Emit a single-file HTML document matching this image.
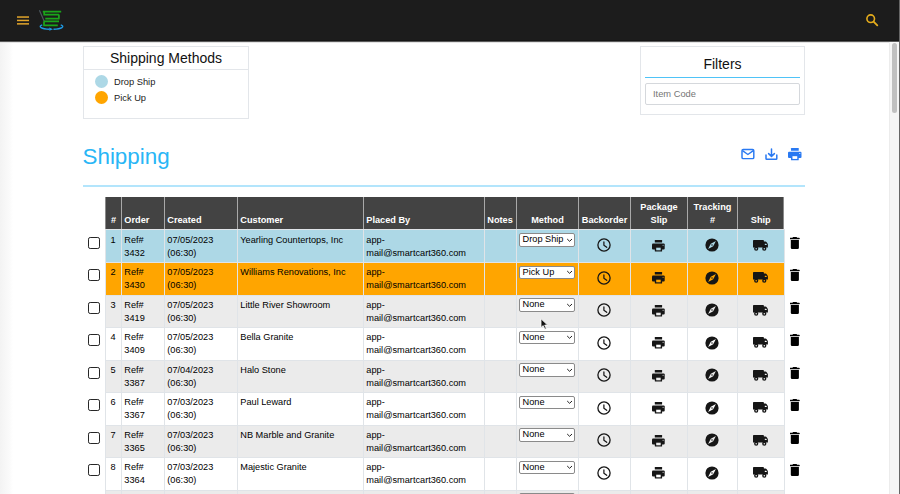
<!DOCTYPE html>
<html><head><meta charset="utf-8"><style>
*{box-sizing:border-box}
html,body{margin:0;padding:0;background:#fff;width:900px;height:494px;overflow:hidden;font-family:"Liberation Sans",sans-serif;color:#222}
.abs{position:absolute}
.hdr{position:absolute;left:0;top:0;width:900px;height:41px;background:#1c1c1c;box-shadow:0 1px 1px rgba(0,0,0,.65), inset 0 -1px 0 #151515}
.lgrad{position:absolute;left:0;top:43px;width:13px;height:452px;background:linear-gradient(to right,#f3f3f3,#fafafa 70%,#fff)}
.sb{position:absolute;left:889px;top:42px;width:10px;height:452px;background:#f6f6f6;border-left:1px solid #ececec}
.thumb{position:absolute;left:2px;top:1.3px;width:5.4px;height:70px;border-radius:2.75px;background:#c1c1c1}
.redge{position:absolute;left:899px;top:0;width:1px;height:494px;background:#666}
.sm{position:absolute;left:83px;top:46px;width:166px;height:73px;border:1px solid #e3e6ea}
.sm .t{position:absolute;left:0;top:0;width:164px;height:23px;border-bottom:1px solid #e3e6ea;font-size:14px;text-align:center;line-height:22px;color:#111}
.leg{position:absolute;left:11px;font-size:9.3px;color:#222}
.leg .dot{position:absolute;left:0;top:0;width:13px;height:13px;border-radius:50%}
.leg span{position:absolute;left:19px;top:1px;white-space:nowrap;line-height:12px}
.fl{position:absolute;left:640px;top:46px;width:165px;height:69px;border:1px solid #e3e6ea}
.fl .t{position:absolute;left:4px;top:0;width:155px;height:31px;border-bottom:1.5px solid #4fc3f7;font-size:14px;text-align:center;line-height:34px;color:#111}
.fl .in{position:absolute;left:4px;top:36px;width:155px;height:22px;border:1px solid #d5d8dc;border-radius:2px;font-size:9.3px;color:#757575;padding-left:7px;line-height:21px}
.ttl{position:absolute;left:82.5px;top:141.7px;font-size:22.4px;color:#29b6f6;line-height:30px}
.hl{position:absolute;left:83px;top:185px;width:722px;height:2px;background:#b3e5fc}
.th{position:absolute;color:#fff;font-weight:bold;font-size:9.2px;line-height:13.1px;white-space:nowrap}
.td{position:absolute;color:#000;font-size:9.2px;line-height:13px;white-space:nowrap}
.hb{left:105px;width:678.5px;height:1px;background:#e0e4e8}
.vb{top:229px;width:1px;height:265px;background:#e0e4e8}
.sel{position:absolute;height:13.5px;width:56px;border:1px solid #8a8a8a;border-radius:2px;background:#fff;font-size:9.2px;line-height:11px;padding-left:2.6px;color:#000}
.sel svg{position:absolute;right:1.2px;top:3.6px}
.cb{position:absolute;left:88px;width:12px;height:12px;border:1.5px solid #262626;border-radius:2.2px;background:#fff}
</style></head><body>

<div class="hdr">
<svg class="abs" style="left:16px;top:15px" width="14" height="11" viewBox="0 0 14 11"><rect x="1" y="1.3" width="12" height="1.5" fill="#e2a52b"/><rect x="1" y="4.7" width="12" height="1.5" fill="#e2a52b"/><rect x="1" y="8.1" width="12" height="1.5" fill="#e2a52b"/></svg>
<svg class="abs" style="left:37px;top:8px" width="28" height="25" viewBox="0 0 28 25">
<path d="M2.4 2.3L7.2 13.3" stroke="#4b565e" stroke-width="1.2" fill="none"/>
<path d="M5.8 3.7H24.2M7.2 3.7V6.5M6.4 6.5H21.9M21.9 6.5V10.6M22.6 10.6H8.3M6.6 13.4H22M7 13.4V17.3M6.2 17.3H20.8" stroke="#1aa51a" stroke-width="1.75" fill="none" stroke-linecap="butt"/>
<path d="M5.25 16.9A11.3 2.8 0 0 0 12.5 21.26M16.5 21.26A11.3 2.8 0 0 0 23.75 16.9" stroke="#1e9be6" stroke-width="1.35" fill="none"/>
<path d="M12.3 19.6L16 21.2L12.3 22.8Z" fill="#1e9be6"/>
</svg>
<svg class="abs" style="left:864px;top:12px" width="16" height="16" viewBox="0 0 16 16"><circle cx="6.7" cy="6.7" r="3.8" fill="none" stroke="#e5ac1c" stroke-width="1.6"/><path d="M9.6 9.7L13.3 13.4" stroke="#e5ac1c" stroke-width="1.8" stroke-linecap="round"/></svg>
</div>
<div class="lgrad"></div>
<div class="sb"><div class="thumb"></div></div><div class="redge"></div>

<div class="sm"><div class="t">Shipping Methods</div>
<div class="leg" style="top:27.6px"><div class="dot" style="background:#add8e6"></div><span>Drop Ship</span></div>
<div class="leg" style="top:43.9px"><div class="dot" style="background:#ffa500"></div><span>Pick Up</span></div>
</div>
<div class="fl"><div class="t">Filters</div><div class="in">Item Code</div></div>
<div class="ttl">Shipping</div>
<div class="hl"></div>

<svg class="abs" style="left:740px;top:147px" width="16" height="14" viewBox="0 0 16 14"><rect x="2.0" y="2.5" width="11.8" height="9.1" rx="1.2" fill="none" stroke="#2979f2" stroke-width="1.45"/><path d="M2.5 3.6L7.9 7.5L13.3 3.6" fill="none" stroke="#2979f2" stroke-width="1.4"/></svg>
<svg class="abs" style="left:764px;top:147.8px" width="15" height="14" viewBox="0 0 15 14"><path d="M7.5 1V8.2M4.6 5.6L7.5 8.4L10.4 5.6" fill="none" stroke="#2979f2" stroke-width="1.5" stroke-linecap="round" stroke-linejoin="round"/><path d="M2.0 7.0V10.4A0.8 0.8 0 0 0 2.8 11.2H12.0A0.8 0.8 0 0 0 12.8 10.4V7.0" fill="none" stroke="#2979f2" stroke-width="1.5" stroke-linecap="round"/></svg>

<svg class="abs" style="left:788.20px;top:148.00px" width="13.82" height="12.76" viewBox="0 0 13 12"><rect x="2.8" y="0.1" width="7.3" height="2.5" rx="0.3" fill="#2979f2"/><rect x="0" y="3.6" width="12.7" height="5.8" rx="1" fill="#2979f2"/><rect x="2.8" y="6.5" width="7.3" height="5" rx="0.5" fill="#2979f2"/><rect x="4.2" y="7.7" width="4.5" height="2.6" fill="#fff"/><circle cx="11.1" cy="5.2" r="0.55" fill="#fff"/></svg>
<div class="abs" style="left:105px;top:197px;width:678.5px;height:32px;background:#434343"></div>
<div class="abs" style="left:121px;top:197px;width:1px;height:32px;background:#a9a9a9"></div>
<div class="abs" style="left:164px;top:197px;width:1px;height:32px;background:#a9a9a9"></div>
<div class="abs" style="left:237px;top:197px;width:1px;height:32px;background:#a9a9a9"></div>
<div class="abs" style="left:363px;top:197px;width:1px;height:32px;background:#a9a9a9"></div>
<div class="abs" style="left:484px;top:197px;width:1px;height:32px;background:#a9a9a9"></div>
<div class="abs" style="left:516px;top:197px;width:1px;height:32px;background:#a9a9a9"></div>
<div class="abs" style="left:578px;top:197px;width:1px;height:32px;background:#a9a9a9"></div>
<div class="abs" style="left:630px;top:197px;width:1px;height:32px;background:#a9a9a9"></div>
<div class="abs" style="left:687px;top:197px;width:1px;height:32px;background:#a9a9a9"></div>
<div class="abs" style="left:737px;top:197px;width:1px;height:32px;background:#a9a9a9"></div>
<div class="abs" style="left:105px;top:197px;width:1px;height:32px;background:#8a8a8a"></div>
<div class="abs" style="left:782.5px;top:197px;width:1px;height:32px;background:#8a8a8a"></div>
<div class="th" style="left:106px;top:213.60px;width:15px;text-align:center">#</div>
<div class="th" style="left:124.30px;top:213.60px">Order</div>
<div class="th" style="left:167.30px;top:213.60px">Created</div>
<div class="th" style="left:240.30px;top:213.60px">Customer</div>
<div class="th" style="left:366.30px;top:213.60px">Placed By</div>
<div class="th" style="left:487.30px;top:213.60px">Notes</div>
<div class="th" style="left:517px;top:213.60px;width:61px;text-align:center">Method</div>
<div class="th" style="left:579px;top:213.60px;width:51px;text-align:center">Backorder</div>
<div class="th" style="left:631px;top:200.50px;width:56px;text-align:center">Package<br>Slip</div>
<div class="th" style="left:688px;top:200.50px;width:49px;text-align:center">Tracking<br>#</div>
<div class="th" style="left:738px;top:213.60px;width:45.5px;text-align:center">Ship</div>
<div class="abs" style="left:105px;top:229px;width:678.5px;height:33px;background:#add8e6"></div>
<div class="abs" style="left:105px;top:262px;width:678.5px;height:33px;background:#ffa500"></div>
<div class="abs" style="left:105px;top:295px;width:678.5px;height:32px;background:#ebebeb"></div>
<div class="abs" style="left:105px;top:327px;width:678.5px;height:33px;background:#ffffff"></div>
<div class="abs" style="left:105px;top:360px;width:678.5px;height:32px;background:#ebebeb"></div>
<div class="abs" style="left:105px;top:392px;width:678.5px;height:33px;background:#ffffff"></div>
<div class="abs" style="left:105px;top:425px;width:678.5px;height:32px;background:#ebebeb"></div>
<div class="abs" style="left:105px;top:457px;width:678.5px;height:33px;background:#ffffff"></div>
<div class="abs" style="left:105px;top:490px;width:678.5px;height:33px;background:#ebebeb"></div>
<div class="abs hb" style="top:229px"></div>
<div class="abs hb" style="top:262px"></div>
<div class="abs hb" style="top:295px"></div>
<div class="abs hb" style="top:327px"></div>
<div class="abs hb" style="top:360px"></div>
<div class="abs hb" style="top:392px"></div>
<div class="abs hb" style="top:425px"></div>
<div class="abs hb" style="top:457px"></div>
<div class="abs hb" style="top:490px"></div>
<div class="abs vb" style="left:105px"></div>
<div class="abs vb" style="left:121px"></div>
<div class="abs vb" style="left:164px"></div>
<div class="abs vb" style="left:237px"></div>
<div class="abs vb" style="left:363px"></div>
<div class="abs vb" style="left:484px"></div>
<div class="abs vb" style="left:516px"></div>
<div class="abs vb" style="left:578px"></div>
<div class="abs vb" style="left:630px"></div>
<div class="abs vb" style="left:687px"></div>
<div class="abs vb" style="left:737px"></div>
<div class="abs vb" style="left:783.5px"></div>
<div class="td" style="left:105px;width:16px;text-align:center;top:233.90px">1</div>
<div class="td" style="left:124.30px;top:233.90px">Ref#<br>3432</div>
<div class="td" style="left:167.30px;top:233.90px">07/05/2023<br>(06:30)</div>
<div class="td" style="left:240.30px;top:233.90px">Yearling Countertops, Inc</div>
<div class="td" style="left:366.30px;top:233.90px">app-<br>mail@smartcart360.com</div>
<div class="td" style="left:105px;width:16px;text-align:center;top:266.40px">2</div>
<div class="td" style="left:124.30px;top:266.40px">Ref#<br>3430</div>
<div class="td" style="left:167.30px;top:266.40px">07/05/2023<br>(06:30)</div>
<div class="td" style="left:240.30px;top:266.40px">Williams Renovations, Inc</div>
<div class="td" style="left:366.30px;top:266.40px">app-<br>mail@smartcart360.com</div>
<div class="td" style="left:105px;width:16px;text-align:center;top:298.90px">3</div>
<div class="td" style="left:124.30px;top:298.90px">Ref#<br>3419</div>
<div class="td" style="left:167.30px;top:298.90px">07/05/2023<br>(06:30)</div>
<div class="td" style="left:240.30px;top:298.90px">Little River Showroom</div>
<div class="td" style="left:366.30px;top:298.90px">app-<br>mail@smartcart360.com</div>
<div class="td" style="left:105px;width:16px;text-align:center;top:331.40px">4</div>
<div class="td" style="left:124.30px;top:331.40px">Ref#<br>3409</div>
<div class="td" style="left:167.30px;top:331.40px">07/05/2023<br>(06:30)</div>
<div class="td" style="left:240.30px;top:331.40px">Bella Granite</div>
<div class="td" style="left:366.30px;top:331.40px">app-<br>mail@smartcart360.com</div>
<div class="td" style="left:105px;width:16px;text-align:center;top:363.90px">5</div>
<div class="td" style="left:124.30px;top:363.90px">Ref#<br>3387</div>
<div class="td" style="left:167.30px;top:363.90px">07/04/2023<br>(06:30)</div>
<div class="td" style="left:240.30px;top:363.90px">Halo Stone</div>
<div class="td" style="left:366.30px;top:363.90px">app-<br>mail@smartcart360.com</div>
<div class="td" style="left:105px;width:16px;text-align:center;top:396.40px">6</div>
<div class="td" style="left:124.30px;top:396.40px">Ref#<br>3367</div>
<div class="td" style="left:167.30px;top:396.40px">07/03/2023<br>(06:30)</div>
<div class="td" style="left:240.30px;top:396.40px">Paul Leward</div>
<div class="td" style="left:366.30px;top:396.40px">app-<br>mail@smartcart360.com</div>
<div class="td" style="left:105px;width:16px;text-align:center;top:428.90px">7</div>
<div class="td" style="left:124.30px;top:428.90px">Ref#<br>3365</div>
<div class="td" style="left:167.30px;top:428.90px">07/03/2023<br>(06:30)</div>
<div class="td" style="left:240.30px;top:428.90px">NB Marble and Granite</div>
<div class="td" style="left:366.30px;top:428.90px">app-<br>mail@smartcart360.com</div>
<div class="td" style="left:105px;width:16px;text-align:center;top:461.40px">8</div>
<div class="td" style="left:124.30px;top:461.40px">Ref#<br>3364</div>
<div class="td" style="left:167.30px;top:461.40px">07/03/2023<br>(06:30)</div>
<div class="td" style="left:240.30px;top:461.40px">Majestic Granite</div>
<div class="td" style="left:366.30px;top:461.40px">app-<br>mail@smartcart360.com</div>
<div class="td" style="left:105px;width:16px;text-align:center;top:493.90px">9</div>
<div class="td" style="left:124.30px;top:493.90px">Ref#<br>3360</div>
<div class="td" style="left:167.30px;top:493.90px">07/03/2023<br>(06:30)</div>
<div class="td" style="left:240.30px;top:493.90px">Stone World</div>
<div class="td" style="left:366.30px;top:493.90px">app-<br>mail@smartcart360.com</div>
<div class="cb" style="top:236.60px"></div>
<div class="sel" style="left:519px;top:233.20px">Drop Ship<svg width="7" height="5" viewBox="0 0 7 5"><path d="M1.2 1.0L3.6 3.3L6.0 1.0" fill="none" stroke="#222" stroke-width="1"/></svg></div>
<svg class="abs" style="left:597.20px;top:238.20px" width="14" height="14" viewBox="0 0 14 14"><circle cx="7" cy="7" r="6.1" fill="none" stroke="#161616" stroke-width="1.3"/><path d="M6.9 3.9V7.3L9.7 9.3" fill="none" stroke="#161616" stroke-width="1.25" stroke-linecap="round" stroke-linejoin="round"/></svg>
<svg class="abs" style="left:652.10px;top:239.70px" width="13.00" height="12.00" viewBox="0 0 13 12"><rect x="2.8" y="0.1" width="7.3" height="2.5" rx="0.3" fill="#161616"/><rect x="0" y="3.6" width="12.7" height="5.8" rx="1" fill="#161616"/><rect x="2.8" y="6.5" width="7.3" height="5" rx="0.5" fill="#161616"/><rect x="4.2" y="7.7" width="4.5" height="2.6" fill="#add8e6"/><circle cx="11.1" cy="5.2" r="0.55" fill="#add8e6"/></svg>
<svg class="abs" style="left:705.40px;top:238.20px" width="14" height="14" viewBox="0 0 14 14"><circle cx="7" cy="7" r="6.6" fill="#161616"/><path d="M3.1 10.9L5.8 5.8L10.9 3.1L8.2 8.2Z" fill="#add8e6"/><circle cx="7" cy="7" r="0.75" fill="#161616"/></svg>
<svg class="abs" style="left:753.10px;top:239.90px" width="15" height="11" viewBox="0 0 15 11"><path d="M0.8 0H10.1A0.8 0.8 0 0 1 10.9 0.8V1.6H12.5Q13.1 1.6 13.5 2.1L14.5 3.5Q14.9 4 14.9 4.6V7.6H0V0.8A0.8 0.8 0 0 1 0.8 0Z" fill="#161616"/><path d="M11.8 3.7H13.2L13.8 4.6V5.1H11.8Z" fill="#add8e6"/><circle cx="3.2" cy="8.7" r="2.1" fill="#161616"/><circle cx="3.2" cy="8.7" r="0.75" fill="#add8e6"/><circle cx="11.3" cy="8.7" r="2.1" fill="#161616"/><circle cx="11.3" cy="8.7" r="0.75" fill="#add8e6"/></svg>
<svg class="abs" style="left:789.90px;top:236.50px" width="10" height="13" viewBox="0 0 10 13"><path d="M3.0 0.1H6.6L7.1 0.7H9.0A0.8 0.8 0 0 1 9.0 2.3H0.5A0.8 0.8 0 0 1 0.5 0.7H2.5Z" fill="#000"/><path d="M0.8 3.0H8.9V10.8A1.3 1.3 0 0 1 7.6 12.1H2.1A1.3 1.3 0 0 1 0.8 10.8Z" fill="#000"/></svg>
<div class="cb" style="top:269.10px"></div>
<div class="sel" style="left:519px;top:265.70px">Pick Up<svg width="7" height="5" viewBox="0 0 7 5"><path d="M1.2 1.0L3.6 3.3L6.0 1.0" fill="none" stroke="#222" stroke-width="1"/></svg></div>
<svg class="abs" style="left:597.20px;top:270.70px" width="14" height="14" viewBox="0 0 14 14"><circle cx="7" cy="7" r="6.1" fill="none" stroke="#161616" stroke-width="1.3"/><path d="M6.9 3.9V7.3L9.7 9.3" fill="none" stroke="#161616" stroke-width="1.25" stroke-linecap="round" stroke-linejoin="round"/></svg>
<svg class="abs" style="left:652.10px;top:272.20px" width="13.00" height="12.00" viewBox="0 0 13 12"><rect x="2.8" y="0.1" width="7.3" height="2.5" rx="0.3" fill="#161616"/><rect x="0" y="3.6" width="12.7" height="5.8" rx="1" fill="#161616"/><rect x="2.8" y="6.5" width="7.3" height="5" rx="0.5" fill="#161616"/><rect x="4.2" y="7.7" width="4.5" height="2.6" fill="#ffa500"/><circle cx="11.1" cy="5.2" r="0.55" fill="#ffa500"/></svg>
<svg class="abs" style="left:705.40px;top:270.70px" width="14" height="14" viewBox="0 0 14 14"><circle cx="7" cy="7" r="6.6" fill="#161616"/><path d="M3.1 10.9L5.8 5.8L10.9 3.1L8.2 8.2Z" fill="#ffa500"/><circle cx="7" cy="7" r="0.75" fill="#161616"/></svg>
<svg class="abs" style="left:753.10px;top:272.40px" width="15" height="11" viewBox="0 0 15 11"><path d="M0.8 0H10.1A0.8 0.8 0 0 1 10.9 0.8V1.6H12.5Q13.1 1.6 13.5 2.1L14.5 3.5Q14.9 4 14.9 4.6V7.6H0V0.8A0.8 0.8 0 0 1 0.8 0Z" fill="#161616"/><path d="M11.8 3.7H13.2L13.8 4.6V5.1H11.8Z" fill="#ffa500"/><circle cx="3.2" cy="8.7" r="2.1" fill="#161616"/><circle cx="3.2" cy="8.7" r="0.75" fill="#ffa500"/><circle cx="11.3" cy="8.7" r="2.1" fill="#161616"/><circle cx="11.3" cy="8.7" r="0.75" fill="#ffa500"/></svg>
<svg class="abs" style="left:789.90px;top:269.00px" width="10" height="13" viewBox="0 0 10 13"><path d="M3.0 0.1H6.6L7.1 0.7H9.0A0.8 0.8 0 0 1 9.0 2.3H0.5A0.8 0.8 0 0 1 0.5 0.7H2.5Z" fill="#000"/><path d="M0.8 3.0H8.9V10.8A1.3 1.3 0 0 1 7.6 12.1H2.1A1.3 1.3 0 0 1 0.8 10.8Z" fill="#000"/></svg>
<div class="cb" style="top:301.60px"></div>
<div class="sel" style="left:519px;top:298.20px">None<svg width="7" height="5" viewBox="0 0 7 5"><path d="M1.2 1.0L3.6 3.3L6.0 1.0" fill="none" stroke="#222" stroke-width="1"/></svg></div>
<svg class="abs" style="left:597.20px;top:303.20px" width="14" height="14" viewBox="0 0 14 14"><circle cx="7" cy="7" r="6.1" fill="none" stroke="#161616" stroke-width="1.3"/><path d="M6.9 3.9V7.3L9.7 9.3" fill="none" stroke="#161616" stroke-width="1.25" stroke-linecap="round" stroke-linejoin="round"/></svg>
<svg class="abs" style="left:652.10px;top:304.70px" width="13.00" height="12.00" viewBox="0 0 13 12"><rect x="2.8" y="0.1" width="7.3" height="2.5" rx="0.3" fill="#161616"/><rect x="0" y="3.6" width="12.7" height="5.8" rx="1" fill="#161616"/><rect x="2.8" y="6.5" width="7.3" height="5" rx="0.5" fill="#161616"/><rect x="4.2" y="7.7" width="4.5" height="2.6" fill="#ebebeb"/><circle cx="11.1" cy="5.2" r="0.55" fill="#ebebeb"/></svg>
<svg class="abs" style="left:705.40px;top:303.20px" width="14" height="14" viewBox="0 0 14 14"><circle cx="7" cy="7" r="6.6" fill="#161616"/><path d="M3.1 10.9L5.8 5.8L10.9 3.1L8.2 8.2Z" fill="#ebebeb"/><circle cx="7" cy="7" r="0.75" fill="#161616"/></svg>
<svg class="abs" style="left:753.10px;top:304.90px" width="15" height="11" viewBox="0 0 15 11"><path d="M0.8 0H10.1A0.8 0.8 0 0 1 10.9 0.8V1.6H12.5Q13.1 1.6 13.5 2.1L14.5 3.5Q14.9 4 14.9 4.6V7.6H0V0.8A0.8 0.8 0 0 1 0.8 0Z" fill="#161616"/><path d="M11.8 3.7H13.2L13.8 4.6V5.1H11.8Z" fill="#ebebeb"/><circle cx="3.2" cy="8.7" r="2.1" fill="#161616"/><circle cx="3.2" cy="8.7" r="0.75" fill="#ebebeb"/><circle cx="11.3" cy="8.7" r="2.1" fill="#161616"/><circle cx="11.3" cy="8.7" r="0.75" fill="#ebebeb"/></svg>
<svg class="abs" style="left:789.90px;top:301.50px" width="10" height="13" viewBox="0 0 10 13"><path d="M3.0 0.1H6.6L7.1 0.7H9.0A0.8 0.8 0 0 1 9.0 2.3H0.5A0.8 0.8 0 0 1 0.5 0.7H2.5Z" fill="#000"/><path d="M0.8 3.0H8.9V10.8A1.3 1.3 0 0 1 7.6 12.1H2.1A1.3 1.3 0 0 1 0.8 10.8Z" fill="#000"/></svg>
<div class="cb" style="top:334.10px"></div>
<div class="sel" style="left:519px;top:330.70px">None<svg width="7" height="5" viewBox="0 0 7 5"><path d="M1.2 1.0L3.6 3.3L6.0 1.0" fill="none" stroke="#222" stroke-width="1"/></svg></div>
<svg class="abs" style="left:597.20px;top:335.70px" width="14" height="14" viewBox="0 0 14 14"><circle cx="7" cy="7" r="6.1" fill="none" stroke="#161616" stroke-width="1.3"/><path d="M6.9 3.9V7.3L9.7 9.3" fill="none" stroke="#161616" stroke-width="1.25" stroke-linecap="round" stroke-linejoin="round"/></svg>
<svg class="abs" style="left:652.10px;top:337.20px" width="13.00" height="12.00" viewBox="0 0 13 12"><rect x="2.8" y="0.1" width="7.3" height="2.5" rx="0.3" fill="#161616"/><rect x="0" y="3.6" width="12.7" height="5.8" rx="1" fill="#161616"/><rect x="2.8" y="6.5" width="7.3" height="5" rx="0.5" fill="#161616"/><rect x="4.2" y="7.7" width="4.5" height="2.6" fill="#ffffff"/><circle cx="11.1" cy="5.2" r="0.55" fill="#ffffff"/></svg>
<svg class="abs" style="left:705.40px;top:335.70px" width="14" height="14" viewBox="0 0 14 14"><circle cx="7" cy="7" r="6.6" fill="#161616"/><path d="M3.1 10.9L5.8 5.8L10.9 3.1L8.2 8.2Z" fill="#ffffff"/><circle cx="7" cy="7" r="0.75" fill="#161616"/></svg>
<svg class="abs" style="left:753.10px;top:337.40px" width="15" height="11" viewBox="0 0 15 11"><path d="M0.8 0H10.1A0.8 0.8 0 0 1 10.9 0.8V1.6H12.5Q13.1 1.6 13.5 2.1L14.5 3.5Q14.9 4 14.9 4.6V7.6H0V0.8A0.8 0.8 0 0 1 0.8 0Z" fill="#161616"/><path d="M11.8 3.7H13.2L13.8 4.6V5.1H11.8Z" fill="#ffffff"/><circle cx="3.2" cy="8.7" r="2.1" fill="#161616"/><circle cx="3.2" cy="8.7" r="0.75" fill="#ffffff"/><circle cx="11.3" cy="8.7" r="2.1" fill="#161616"/><circle cx="11.3" cy="8.7" r="0.75" fill="#ffffff"/></svg>
<svg class="abs" style="left:789.90px;top:334.00px" width="10" height="13" viewBox="0 0 10 13"><path d="M3.0 0.1H6.6L7.1 0.7H9.0A0.8 0.8 0 0 1 9.0 2.3H0.5A0.8 0.8 0 0 1 0.5 0.7H2.5Z" fill="#000"/><path d="M0.8 3.0H8.9V10.8A1.3 1.3 0 0 1 7.6 12.1H2.1A1.3 1.3 0 0 1 0.8 10.8Z" fill="#000"/></svg>
<div class="cb" style="top:366.60px"></div>
<div class="sel" style="left:519px;top:363.20px">None<svg width="7" height="5" viewBox="0 0 7 5"><path d="M1.2 1.0L3.6 3.3L6.0 1.0" fill="none" stroke="#222" stroke-width="1"/></svg></div>
<svg class="abs" style="left:597.20px;top:368.20px" width="14" height="14" viewBox="0 0 14 14"><circle cx="7" cy="7" r="6.1" fill="none" stroke="#161616" stroke-width="1.3"/><path d="M6.9 3.9V7.3L9.7 9.3" fill="none" stroke="#161616" stroke-width="1.25" stroke-linecap="round" stroke-linejoin="round"/></svg>
<svg class="abs" style="left:652.10px;top:369.70px" width="13.00" height="12.00" viewBox="0 0 13 12"><rect x="2.8" y="0.1" width="7.3" height="2.5" rx="0.3" fill="#161616"/><rect x="0" y="3.6" width="12.7" height="5.8" rx="1" fill="#161616"/><rect x="2.8" y="6.5" width="7.3" height="5" rx="0.5" fill="#161616"/><rect x="4.2" y="7.7" width="4.5" height="2.6" fill="#ebebeb"/><circle cx="11.1" cy="5.2" r="0.55" fill="#ebebeb"/></svg>
<svg class="abs" style="left:705.40px;top:368.20px" width="14" height="14" viewBox="0 0 14 14"><circle cx="7" cy="7" r="6.6" fill="#161616"/><path d="M3.1 10.9L5.8 5.8L10.9 3.1L8.2 8.2Z" fill="#ebebeb"/><circle cx="7" cy="7" r="0.75" fill="#161616"/></svg>
<svg class="abs" style="left:753.10px;top:369.90px" width="15" height="11" viewBox="0 0 15 11"><path d="M0.8 0H10.1A0.8 0.8 0 0 1 10.9 0.8V1.6H12.5Q13.1 1.6 13.5 2.1L14.5 3.5Q14.9 4 14.9 4.6V7.6H0V0.8A0.8 0.8 0 0 1 0.8 0Z" fill="#161616"/><path d="M11.8 3.7H13.2L13.8 4.6V5.1H11.8Z" fill="#ebebeb"/><circle cx="3.2" cy="8.7" r="2.1" fill="#161616"/><circle cx="3.2" cy="8.7" r="0.75" fill="#ebebeb"/><circle cx="11.3" cy="8.7" r="2.1" fill="#161616"/><circle cx="11.3" cy="8.7" r="0.75" fill="#ebebeb"/></svg>
<svg class="abs" style="left:789.90px;top:366.50px" width="10" height="13" viewBox="0 0 10 13"><path d="M3.0 0.1H6.6L7.1 0.7H9.0A0.8 0.8 0 0 1 9.0 2.3H0.5A0.8 0.8 0 0 1 0.5 0.7H2.5Z" fill="#000"/><path d="M0.8 3.0H8.9V10.8A1.3 1.3 0 0 1 7.6 12.1H2.1A1.3 1.3 0 0 1 0.8 10.8Z" fill="#000"/></svg>
<div class="cb" style="top:399.10px"></div>
<div class="sel" style="left:519px;top:395.70px">None<svg width="7" height="5" viewBox="0 0 7 5"><path d="M1.2 1.0L3.6 3.3L6.0 1.0" fill="none" stroke="#222" stroke-width="1"/></svg></div>
<svg class="abs" style="left:597.20px;top:400.70px" width="14" height="14" viewBox="0 0 14 14"><circle cx="7" cy="7" r="6.1" fill="none" stroke="#161616" stroke-width="1.3"/><path d="M6.9 3.9V7.3L9.7 9.3" fill="none" stroke="#161616" stroke-width="1.25" stroke-linecap="round" stroke-linejoin="round"/></svg>
<svg class="abs" style="left:652.10px;top:402.20px" width="13.00" height="12.00" viewBox="0 0 13 12"><rect x="2.8" y="0.1" width="7.3" height="2.5" rx="0.3" fill="#161616"/><rect x="0" y="3.6" width="12.7" height="5.8" rx="1" fill="#161616"/><rect x="2.8" y="6.5" width="7.3" height="5" rx="0.5" fill="#161616"/><rect x="4.2" y="7.7" width="4.5" height="2.6" fill="#ffffff"/><circle cx="11.1" cy="5.2" r="0.55" fill="#ffffff"/></svg>
<svg class="abs" style="left:705.40px;top:400.70px" width="14" height="14" viewBox="0 0 14 14"><circle cx="7" cy="7" r="6.6" fill="#161616"/><path d="M3.1 10.9L5.8 5.8L10.9 3.1L8.2 8.2Z" fill="#ffffff"/><circle cx="7" cy="7" r="0.75" fill="#161616"/></svg>
<svg class="abs" style="left:753.10px;top:402.40px" width="15" height="11" viewBox="0 0 15 11"><path d="M0.8 0H10.1A0.8 0.8 0 0 1 10.9 0.8V1.6H12.5Q13.1 1.6 13.5 2.1L14.5 3.5Q14.9 4 14.9 4.6V7.6H0V0.8A0.8 0.8 0 0 1 0.8 0Z" fill="#161616"/><path d="M11.8 3.7H13.2L13.8 4.6V5.1H11.8Z" fill="#ffffff"/><circle cx="3.2" cy="8.7" r="2.1" fill="#161616"/><circle cx="3.2" cy="8.7" r="0.75" fill="#ffffff"/><circle cx="11.3" cy="8.7" r="2.1" fill="#161616"/><circle cx="11.3" cy="8.7" r="0.75" fill="#ffffff"/></svg>
<svg class="abs" style="left:789.90px;top:399.00px" width="10" height="13" viewBox="0 0 10 13"><path d="M3.0 0.1H6.6L7.1 0.7H9.0A0.8 0.8 0 0 1 9.0 2.3H0.5A0.8 0.8 0 0 1 0.5 0.7H2.5Z" fill="#000"/><path d="M0.8 3.0H8.9V10.8A1.3 1.3 0 0 1 7.6 12.1H2.1A1.3 1.3 0 0 1 0.8 10.8Z" fill="#000"/></svg>
<div class="cb" style="top:431.60px"></div>
<div class="sel" style="left:519px;top:428.20px">None<svg width="7" height="5" viewBox="0 0 7 5"><path d="M1.2 1.0L3.6 3.3L6.0 1.0" fill="none" stroke="#222" stroke-width="1"/></svg></div>
<svg class="abs" style="left:597.20px;top:433.20px" width="14" height="14" viewBox="0 0 14 14"><circle cx="7" cy="7" r="6.1" fill="none" stroke="#161616" stroke-width="1.3"/><path d="M6.9 3.9V7.3L9.7 9.3" fill="none" stroke="#161616" stroke-width="1.25" stroke-linecap="round" stroke-linejoin="round"/></svg>
<svg class="abs" style="left:652.10px;top:434.70px" width="13.00" height="12.00" viewBox="0 0 13 12"><rect x="2.8" y="0.1" width="7.3" height="2.5" rx="0.3" fill="#161616"/><rect x="0" y="3.6" width="12.7" height="5.8" rx="1" fill="#161616"/><rect x="2.8" y="6.5" width="7.3" height="5" rx="0.5" fill="#161616"/><rect x="4.2" y="7.7" width="4.5" height="2.6" fill="#ebebeb"/><circle cx="11.1" cy="5.2" r="0.55" fill="#ebebeb"/></svg>
<svg class="abs" style="left:705.40px;top:433.20px" width="14" height="14" viewBox="0 0 14 14"><circle cx="7" cy="7" r="6.6" fill="#161616"/><path d="M3.1 10.9L5.8 5.8L10.9 3.1L8.2 8.2Z" fill="#ebebeb"/><circle cx="7" cy="7" r="0.75" fill="#161616"/></svg>
<svg class="abs" style="left:753.10px;top:434.90px" width="15" height="11" viewBox="0 0 15 11"><path d="M0.8 0H10.1A0.8 0.8 0 0 1 10.9 0.8V1.6H12.5Q13.1 1.6 13.5 2.1L14.5 3.5Q14.9 4 14.9 4.6V7.6H0V0.8A0.8 0.8 0 0 1 0.8 0Z" fill="#161616"/><path d="M11.8 3.7H13.2L13.8 4.6V5.1H11.8Z" fill="#ebebeb"/><circle cx="3.2" cy="8.7" r="2.1" fill="#161616"/><circle cx="3.2" cy="8.7" r="0.75" fill="#ebebeb"/><circle cx="11.3" cy="8.7" r="2.1" fill="#161616"/><circle cx="11.3" cy="8.7" r="0.75" fill="#ebebeb"/></svg>
<svg class="abs" style="left:789.90px;top:431.50px" width="10" height="13" viewBox="0 0 10 13"><path d="M3.0 0.1H6.6L7.1 0.7H9.0A0.8 0.8 0 0 1 9.0 2.3H0.5A0.8 0.8 0 0 1 0.5 0.7H2.5Z" fill="#000"/><path d="M0.8 3.0H8.9V10.8A1.3 1.3 0 0 1 7.6 12.1H2.1A1.3 1.3 0 0 1 0.8 10.8Z" fill="#000"/></svg>
<div class="cb" style="top:464.10px"></div>
<div class="sel" style="left:519px;top:460.70px">None<svg width="7" height="5" viewBox="0 0 7 5"><path d="M1.2 1.0L3.6 3.3L6.0 1.0" fill="none" stroke="#222" stroke-width="1"/></svg></div>
<svg class="abs" style="left:597.20px;top:465.70px" width="14" height="14" viewBox="0 0 14 14"><circle cx="7" cy="7" r="6.1" fill="none" stroke="#161616" stroke-width="1.3"/><path d="M6.9 3.9V7.3L9.7 9.3" fill="none" stroke="#161616" stroke-width="1.25" stroke-linecap="round" stroke-linejoin="round"/></svg>
<svg class="abs" style="left:652.10px;top:467.20px" width="13.00" height="12.00" viewBox="0 0 13 12"><rect x="2.8" y="0.1" width="7.3" height="2.5" rx="0.3" fill="#161616"/><rect x="0" y="3.6" width="12.7" height="5.8" rx="1" fill="#161616"/><rect x="2.8" y="6.5" width="7.3" height="5" rx="0.5" fill="#161616"/><rect x="4.2" y="7.7" width="4.5" height="2.6" fill="#ffffff"/><circle cx="11.1" cy="5.2" r="0.55" fill="#ffffff"/></svg>
<svg class="abs" style="left:705.40px;top:465.70px" width="14" height="14" viewBox="0 0 14 14"><circle cx="7" cy="7" r="6.6" fill="#161616"/><path d="M3.1 10.9L5.8 5.8L10.9 3.1L8.2 8.2Z" fill="#ffffff"/><circle cx="7" cy="7" r="0.75" fill="#161616"/></svg>
<svg class="abs" style="left:753.10px;top:467.40px" width="15" height="11" viewBox="0 0 15 11"><path d="M0.8 0H10.1A0.8 0.8 0 0 1 10.9 0.8V1.6H12.5Q13.1 1.6 13.5 2.1L14.5 3.5Q14.9 4 14.9 4.6V7.6H0V0.8A0.8 0.8 0 0 1 0.8 0Z" fill="#161616"/><path d="M11.8 3.7H13.2L13.8 4.6V5.1H11.8Z" fill="#ffffff"/><circle cx="3.2" cy="8.7" r="2.1" fill="#161616"/><circle cx="3.2" cy="8.7" r="0.75" fill="#ffffff"/><circle cx="11.3" cy="8.7" r="2.1" fill="#161616"/><circle cx="11.3" cy="8.7" r="0.75" fill="#ffffff"/></svg>
<svg class="abs" style="left:789.90px;top:464.00px" width="10" height="13" viewBox="0 0 10 13"><path d="M3.0 0.1H6.6L7.1 0.7H9.0A0.8 0.8 0 0 1 9.0 2.3H0.5A0.8 0.8 0 0 1 0.5 0.7H2.5Z" fill="#000"/><path d="M0.8 3.0H8.9V10.8A1.3 1.3 0 0 1 7.6 12.1H2.1A1.3 1.3 0 0 1 0.8 10.8Z" fill="#000"/></svg>
<div class="cb" style="top:496.60px"></div>
<div class="sel" style="left:519px;top:493.20px">None<svg width="7" height="5" viewBox="0 0 7 5"><path d="M1.2 1.0L3.6 3.3L6.0 1.0" fill="none" stroke="#222" stroke-width="1"/></svg></div>
<svg class="abs" style="left:597.20px;top:498.20px" width="14" height="14" viewBox="0 0 14 14"><circle cx="7" cy="7" r="6.1" fill="none" stroke="#161616" stroke-width="1.3"/><path d="M6.9 3.9V7.3L9.7 9.3" fill="none" stroke="#161616" stroke-width="1.25" stroke-linecap="round" stroke-linejoin="round"/></svg>
<svg class="abs" style="left:652.10px;top:499.70px" width="13.00" height="12.00" viewBox="0 0 13 12"><rect x="2.8" y="0.1" width="7.3" height="2.5" rx="0.3" fill="#161616"/><rect x="0" y="3.6" width="12.7" height="5.8" rx="1" fill="#161616"/><rect x="2.8" y="6.5" width="7.3" height="5" rx="0.5" fill="#161616"/><rect x="4.2" y="7.7" width="4.5" height="2.6" fill="#ebebeb"/><circle cx="11.1" cy="5.2" r="0.55" fill="#ebebeb"/></svg>
<svg class="abs" style="left:705.40px;top:498.20px" width="14" height="14" viewBox="0 0 14 14"><circle cx="7" cy="7" r="6.6" fill="#161616"/><path d="M3.1 10.9L5.8 5.8L10.9 3.1L8.2 8.2Z" fill="#ebebeb"/><circle cx="7" cy="7" r="0.75" fill="#161616"/></svg>
<svg class="abs" style="left:753.10px;top:499.90px" width="15" height="11" viewBox="0 0 15 11"><path d="M0.8 0H10.1A0.8 0.8 0 0 1 10.9 0.8V1.6H12.5Q13.1 1.6 13.5 2.1L14.5 3.5Q14.9 4 14.9 4.6V7.6H0V0.8A0.8 0.8 0 0 1 0.8 0Z" fill="#161616"/><path d="M11.8 3.7H13.2L13.8 4.6V5.1H11.8Z" fill="#ebebeb"/><circle cx="3.2" cy="8.7" r="2.1" fill="#161616"/><circle cx="3.2" cy="8.7" r="0.75" fill="#ebebeb"/><circle cx="11.3" cy="8.7" r="2.1" fill="#161616"/><circle cx="11.3" cy="8.7" r="0.75" fill="#ebebeb"/></svg>
<svg class="abs" style="left:789.90px;top:496.50px" width="10" height="13" viewBox="0 0 10 13"><path d="M3.0 0.1H6.6L7.1 0.7H9.0A0.8 0.8 0 0 1 9.0 2.3H0.5A0.8 0.8 0 0 1 0.5 0.7H2.5Z" fill="#000"/><path d="M0.8 3.0H8.9V10.8A1.3 1.3 0 0 1 7.6 12.1H2.1A1.3 1.3 0 0 1 0.8 10.8Z" fill="#000"/></svg>
<svg class="abs" style="left:540px;top:317.8px" width="9" height="12" viewBox="0 0 9 12"><path d="M1 0.8V9.6L3.2 7.6L4.9 11.2L6.3 10.5L4.7 7.1H7.6Z" fill="#111" stroke="#fff" stroke-width="0.8"/></svg>
</body></html>
